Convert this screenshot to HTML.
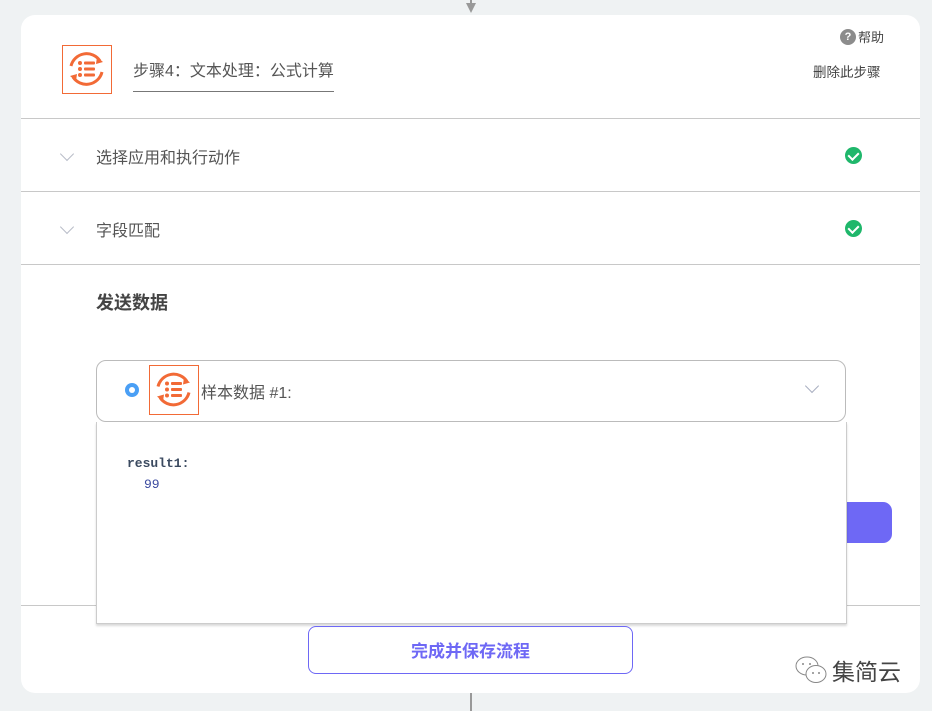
<!DOCTYPE html>
<html><head><meta charset="utf-8"><style>
*{margin:0;padding:0;box-sizing:border-box}
body{width:932px;height:711px;background:#eff2f3;position:relative;overflow:hidden;font-family:"Liberation Sans","Noto Sans CJK SC",sans-serif;color:#555}
.card{position:absolute;left:21px;top:15px;width:899px;height:678px;background:#fff;border-radius:14px}
.abs{position:absolute}
.line{position:absolute;left:0;right:0;height:1px;background:#c8c8c8}
.row{position:absolute;left:75px;font-size:16px;color:#555}
.chev{position:absolute;left:41px;width:10px;height:10px;border-right:1px solid #b8bcc8;border-bottom:1px solid #b8bcc8;transform:rotate(45deg)}
.check{position:absolute;left:824px;width:17px;height:17px;border-radius:50%;background:#1fb76b}
.check:after{content:"";position:absolute;left:5px;top:3px;width:5px;height:8px;border-right:2px solid #fff;border-bottom:2px solid #fff;transform:rotate(45deg)}
.ico{position:absolute;border:1.5px solid #f26a36;background:#fff}
</style></head><body>
<div class="abs" style="left:470px;top:0;width:2px;height:6px;background:#999"></div>
<div class="abs" style="left:466px;top:3px;width:0;height:0;border-left:5px solid transparent;border-right:5px solid transparent;border-top:10px solid #999"></div>
<div class="abs" style="left:470px;top:693px;width:2px;height:18px;background:#999"></div>
<div class="card">
  <div class="ico" style="left:41px;top:30px;width:50px;height:49px">
    <svg width="47" height="46" viewBox="0 0 47 46"><g fill="none" stroke="#f26a36" stroke-width="3"><path d="M8 20 A16 16 0 0 1 37 15"/><path d="M39 26 A16 16 0 0 1 10 31"/></g><path d="M34 11 L40 16 L33 18Z M13 35 L7 30 L14 28Z" fill="#f26a36"/><g fill="#f26a36"><circle cx="17" cy="17" r="2"/><circle cx="17" cy="23" r="2"/><circle cx="17" cy="29" r="2"/><rect x="21" y="15.5" width="11" height="3" rx="1"/><rect x="21" y="21.5" width="11" height="3" rx="1"/><rect x="21" y="27.5" width="11" height="3" rx="1"/></g></svg>
  </div>
  <div class="abs" style="left:112px;top:42px;font-size:16px;color:#555">步骤4：文本处理：公式计算</div>
  <div class="abs" style="left:112px;top:76px;width:201px;height:1px;background:#777"></div>
  <div class="abs" style="left:819px;top:14px;width:16px;height:16px;border-radius:50%;background:#8c8c8c;color:#fff;font-size:11px;font-weight:bold;text-align:center;line-height:16px">?</div>
  <div class="abs" style="left:837px;top:12px;font-size:13px;color:#444">帮助</div>
  <div class="abs" style="left:792px;top:46px;font-size:13.5px;color:#444">删除此步骤</div>
  <div class="line" style="top:103px"></div>
  <div class="chev" style="top:134px"></div>
  <div class="row" style="top:129px">选择应用和执行动作</div>
  <div class="check" style="top:132px"></div>
  <div class="line" style="top:176px"></div>
  <div class="chev" style="top:207px"></div>
  <div class="row" style="top:202px">字段匹配</div>
  <div class="check" style="top:205px"></div>
  <div class="line" style="top:249px"></div>
  <div class="row" style="top:274px;font-size:18px;font-weight:bold;color:#444">发送数据</div>
  <div class="abs" style="left:75px;top:345px;width:750px;height:62px;border:1px solid #bbb;border-radius:10px"></div>
  <div class="abs" style="left:104px;top:368px;width:14px;height:14px;border-radius:50%;background:#4a9ff5"></div>
  <div class="abs" style="left:108px;top:372px;width:6px;height:6px;border-radius:50%;background:#fff"></div>
  <div class="ico" style="left:128px;top:350px;width:50px;height:50px">
    <svg width="47" height="47" viewBox="0 0 47 46"><g fill="none" stroke="#f26a36" stroke-width="3"><path d="M8 20 A16 16 0 0 1 37 15"/><path d="M39 26 A16 16 0 0 1 10 31"/></g><path d="M34 11 L40 16 L33 18Z M13 35 L7 30 L14 28Z" fill="#f26a36"/><g fill="#f26a36"><circle cx="17" cy="17" r="2"/><circle cx="17" cy="23" r="2"/><circle cx="17" cy="29" r="2"/><rect x="21" y="15.5" width="11" height="3" rx="1"/><rect x="21" y="21.5" width="11" height="3" rx="1"/><rect x="21" y="27.5" width="11" height="3" rx="1"/></g></svg>
  </div>
  <div class="abs" style="left:180px;top:364px;font-size:16px;color:#555">样本数据 #1:</div>
  <div class="abs" style="left:786px;top:366px;width:10px;height:10px;border-right:1.5px solid #a8aec0;border-bottom:1.5px solid #a8aec0;transform:rotate(45deg)"></div>
  <div class="abs" style="left:825px;top:487px;width:46px;height:41px;background:#6e68f5;border-radius:0 9px 9px 0"></div>
  <div class="line" style="top:590px"></div>
  <div class="abs" style="left:75px;top:407px;width:751px;height:202px;background:#fff;border:1px solid #ccc;border-top:none;box-shadow:0 2px 2px rgba(0,0,0,.15)"></div>
  <div class="abs" style="left:106px;top:441px;font-family:'Liberation Mono','DejaVu Sans Mono',monospace;font-size:13px;font-weight:bold;color:#3b4a60">result1:</div>
  <div class="abs" style="left:123px;top:462px;font-family:'Liberation Mono','DejaVu Sans Mono',monospace;font-size:13px;color:#3b4aa0">99</div>
  <div class="abs" style="left:287px;top:611px;width:325px;height:48px;border:1px solid #6e68f5;border-radius:8px;text-align:center;line-height:50px;font-size:17px;font-weight:bold;color:#6e68f5">完成并保存流程</div>
  <svg class="abs" style="left:773px;top:640px" width="36" height="32" viewBox="0 0 36 32"><g fill="#fff" stroke="#888" stroke-width="1"><ellipse cx="13" cy="11" rx="11" ry="9"/><ellipse cx="22" cy="19" rx="10" ry="8.5"/></g><g fill="#888"><circle cx="9" cy="9" r="1"/><circle cx="16" cy="9" r="1"/><circle cx="19" cy="18" r="1"/><circle cx="25" cy="18" r="1"/></g></svg>
  <div class="abs" style="left:811px;top:638px;font-size:23px;color:#444">集简云</div>
</div>
</body></html>
